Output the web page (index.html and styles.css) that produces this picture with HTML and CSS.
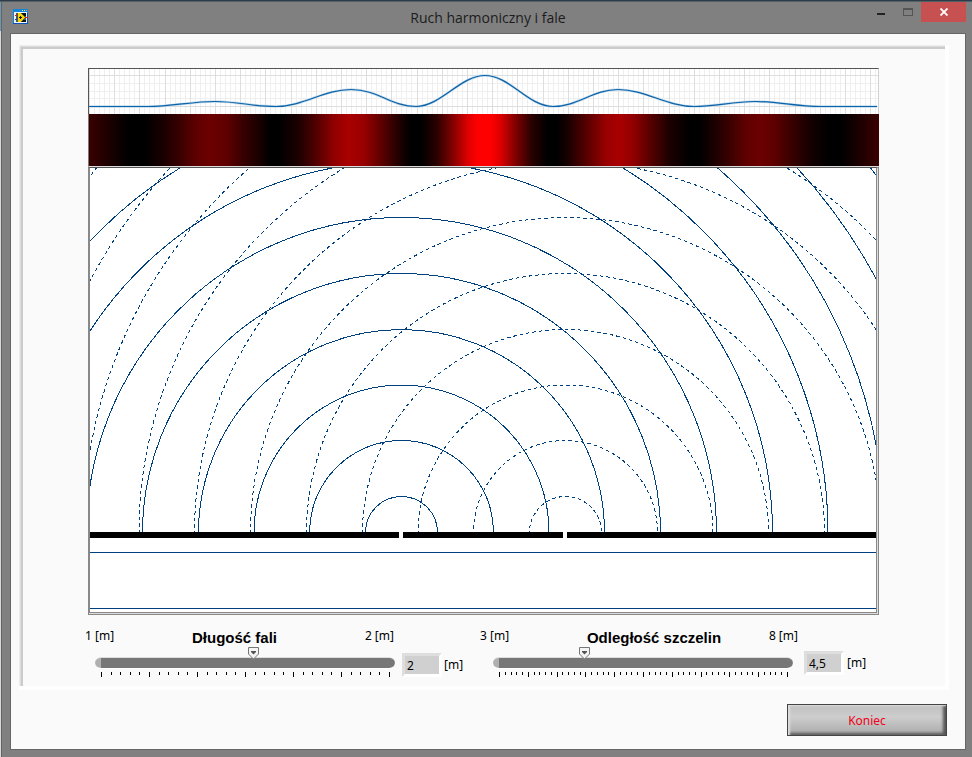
FILE: index.html
```html
<!DOCTYPE html>
<html lang="pl">
<head>
<meta charset="utf-8">
<title>Ruch harmoniczny i fale</title>
<link rel="stylesheet" href="styles.css">
</head>
<body>
<header class="titlebar">
  <svg class="app-icon" viewBox="0 0 15 15" width="15" height="15" shape-rendering="crispEdges" aria-hidden="true">
    <rect width="15" height="15" fill="#0f86dc"/>
    <path d="M0 14H15V4H14V14Z" fill="#0a55bd"/>
    <rect y="14" width="15" height="1" fill="#0a55bd"/>
    <path d="M9 1h1v1H9zM11 1h1v1h-1z" fill="#ffd83c"/>
    <path d="M13 1h1v1h-1z" fill="#ff9a6a"/>
    <rect x="1" y="3" width="13" height="11" fill="#eef4f8"/>
    <path d="M3 4H13V13H3Z" fill="#4a5658"/>
    <path d="M9 4h4v3h-2zM10 11h3v2H9z" fill="#101010"/>
    <path d="M5 4H7L12 8V9L7 13H5Z" fill="#f5d800"/>
    <path d="M7 7h1v3H7zM6 8h3v1H6z" fill="#111"/>
    <path d="M2 6h2v1H2zM12 8h3v1h-3z" fill="#e01b1b"/>
    <path d="M2 10h2v1H2z" fill="#1a2fd0"/>
  </svg>
  <h1 class="title">Ruch harmoniczny i fale</h1>
  <div class="window-buttons">
    <button class="win-btn" type="button" aria-label="Minimalizuj">
      <svg width="10" height="10" viewBox="0 0 10 10" shape-rendering="crispEdges"><path d="M1 6h8v2H1z" fill="#222"/></svg>
    </button>
    <button class="win-btn" type="button" aria-label="Maksymalizuj" disabled>
      <svg width="10" height="8" viewBox="0 0 10 8" shape-rendering="crispEdges"><path d="M0 0H10V8H0ZM1 2V7H9V2Z" fill="#555" fill-rule="evenodd"/></svg>
    </button>
    <button class="win-btn close" type="button" aria-label="Zamknij">
      <svg width="8" height="8" viewBox="0 0 8 8"><path d="M0.5 0.5L7.5 7.5M7.5 0.5L0.5 7.5" stroke="#fff" stroke-width="1.8"/></svg>
    </button>
  </div>
</header>

<main class="client">
  <section class="panel">
    <div class="sim">
      <div class="plot">
        <svg viewBox="0 0 789 45" role="img" aria-label="Natężenie">
          <defs>
            <pattern id="grid" width="126" height="45" patternUnits="userSpaceOnUse">
              <g shape-rendering="crispEdges">
                <path d="M5.5 0v45M10.5 0v45M15.5 0v45M20.5 0v45M30.5 0v45M35.5 0v45M40.5 0v45M45.5 0v45M55.5 0v45M60.5 0v45M65.5 0v45M70.5 0v45M81.5 0v45M86.5 0v45M91.5 0v45M96.5 0v45M106.5 0v45M111.5 0v45M116.5 0v45M121.5 0v45M0 14.5H126M0 22.5H126M0 29.5H126" stroke="#efefef"/>
                <path d="M.5 0v45M25.5 0v45M50.5 0v45M76.5 0v45M101.5 0v45M0 6.5H126M0 37.5H126" stroke="#dedede"/>
              </g>
            </pattern>
            <path id="curve" d="M0 37.5H59C84 37.5 102 32.5 126 32.5C150 32.5 163 37.5 187 37.5C214 37.5 235 20.5 262 20.5C289 20.5 302 37.5 327 37.5C352 37.5 371 6.5 396 6.5C421 6.5 439 37.5 464 37.5C489 37.5 504 20.5 529 20.5C556 20.5 578 37.5 605 37.5C628 37.5 642 32.5 666 32.5C690 32.5 706 37.5 732 37.5H788"/>
          </defs>
          <rect width="789" height="45" fill="url(#grid)"/>
          <use href="#curve" fill="none" stroke="#c4dcec" stroke-width="2.500"/>
          <use href="#curve" fill="none" stroke="#0b62a8" stroke-width="1.200"/>
        </svg>
      </div>
      <div class="fringes"></div>
      <div class="waves">
        <svg viewBox="0 0 786 444" role="img" aria-label="Fale za szczelinami">
          <defs><clipPath id="above"><rect width="786" height="364"/></clipPath></defs>
          <g shape-rendering="crispEdges" fill="none" stroke="#00407f">
            <g clip-path="url(#above)">
              <circle cx="311.500" cy="364.500" r="36"/>
              <circle cx="311.500" cy="364.500" r="92"/>
              <circle cx="311.500" cy="364.500" r="147.500"/>
              <circle cx="311.500" cy="364.500" r="203"/>
              <circle cx="311.500" cy="364.500" r="259"/>
              <circle cx="311.500" cy="364.500" r="315"/>
              <circle cx="311.500" cy="364.500" r="371"/>
              <circle cx="311.500" cy="364.500" r="426.500"/>
              <circle cx="311.500" cy="364.500" r="482.500"/>
              <circle cx="311.500" cy="364.500" r="538"/>
              <circle cx="311.500" cy="364.500" r="594"/>
              <g stroke-dasharray="3.500 3">
                <circle cx="475.500" cy="364.500" r="36"/>
                <circle cx="475.500" cy="364.500" r="92"/>
                <circle cx="475.500" cy="364.500" r="147.500"/>
                <circle cx="475.500" cy="364.500" r="203"/>
                <circle cx="475.500" cy="364.500" r="259"/>
                <circle cx="475.500" cy="364.500" r="315"/>
                <circle cx="475.500" cy="364.500" r="371"/>
                <circle cx="475.500" cy="364.500" r="426.500"/>
                <circle cx="475.500" cy="364.500" r="482.500"/>
                <circle cx="475.500" cy="364.500" r="538"/>
                <circle cx="475.500" cy="364.500" r="594"/>
              </g>
            </g>
            <path d="M0 384.500H786M0 440.500H786"/>
          </g>
          <path d="M0 364H309V370H0ZM313 364H473V370H313ZM477 364H786V370H477Z"/>
        </svg>
      </div>
    </div>

    <div class="controls">
      <div class="control length">
        <div class="scale-head">
          <span>1 [m]</span>
          <label class="name" for="length">Długość fali</label>
          <span>2 [m]</span>
        </div>
        <div class="slider">
          <input class="range" id="length" type="range" min="1" max="2" step="0.01" value="1.53">
          <svg class="ticks" viewBox="0 0 300 5" shape-rendering="crispEdges" aria-hidden="true">
            <defs><pattern id="t1" x="6" width="48" height="5" patternUnits="userSpaceOnUse"><path d="M0 0h1v5H0zM10 0h1v3h-1zM19 0h1v3h-1zM29 0h1v3h-1zM38 0h1v3h-1z"/></pattern></defs>
            <rect x="6" width="289" height="5" fill="url(#t1)"/>
          </svg>
        </div>
        <input class="value" type="text" value="2" aria-label="Długość fali">
        <span class="unit">[m]</span>
      </div>

      <div class="control distance">
        <div class="scale-head">
          <span>3 [m]</span>
          <label class="name" for="distance">Odległość szczelin</label>
          <span>8 [m]</span>
        </div>
        <div class="slider">
          <input class="range" id="distance" type="range" min="3" max="8" step="0.1" value="4.5">
          <svg class="ticks" viewBox="0 0 300 5" shape-rendering="crispEdges" aria-hidden="true">
            <defs><pattern id="t2" x="6" width="144" height="5" patternUnits="userSpaceOnUse"><path d="M0 0h1v5H0zM6 0h1v3h-1zM12 0h1v3h-1zM17 0h1v3h-1zM23 0h1v3h-1zM29 0h1v5h-1zM35 0h1v3h-1zM40 0h1v3h-1zM46 0h1v3h-1zM52 0h1v3h-1zM58 0h1v5h-1zM63 0h1v3h-1zM69 0h1v3h-1zM75 0h1v3h-1zM81 0h1v3h-1zM86 0h1v5h-1zM92 0h1v3h-1zM98 0h1v3h-1zM104 0h1v3h-1zM109 0h1v3h-1zM115 0h1v5h-1zM121 0h1v3h-1zM127 0h1v3h-1zM132 0h1v3h-1zM138 0h1v3h-1z"/></pattern></defs>
            <rect x="6" width="289" height="5" fill="url(#t2)"/>
          </svg>
        </div>
        <input class="value" type="text" value="4,5" aria-label="Odległość szczelin">
        <span class="unit">[m]</span>
      </div>
    </div>
  </section>

  <button class="quit" type="button">Koniec</button>
</main>
</body>
</html>
```
FILE: styles.css
```css
* {
  box-sizing: border-box;
}

body {
  margin: 0;
  min-height: 100vh;
  padding: 0 6px 7px 10px;
  background:
    linear-gradient(#2d3a47, #2d3a47) 0 0 / 100% 1px no-repeat,
    linear-gradient(#555f68, #555f68) 0 1px / 100% 1px no-repeat,
    linear-gradient(#6c98b8, #6c98b8) 0 0 / 1px 31px no-repeat,
    linear-gradient(#d8d8d8, #d8d8d8) 0 0 / 1px 100% no-repeat,
    linear-gradient(#646464, #646464) 1px 0 / 1px 100% no-repeat,
    #808080;
  font-family: "Noto Sans", "Open Sans", sans-serif;
  font-size: 12px;
  line-height: 16px;
  color: #000;
}

.titlebar {
  display: grid;
  grid-template-columns: 1fr auto 1fr;
  height: 33px;
}

.app-icon {
  margin: 9px 0 0 3px;
}

.title {
  margin: 0;
  font-family: "Open Sans", sans-serif;
  font-size: 14px;
  font-weight: 400;
  line-height: 36px;
  color: #1c1c1c;
}

.window-buttons {
  display: flex;
  justify-content: flex-end;
  padding-top: 2px;
}

.win-btn {
  display: flex;
  align-items: center;
  justify-content: center;
  width: 27px;
  height: 20px;
  padding: 0;
  border: 0;
  background: transparent;
}

.win-btn.close {
  width: 45px;
  background: #c75050;
}

.client {
  display: flex;
  flex-direction: column;
  padding: 11px 16px 13px 8px;
  border: 1px solid #666;
  background: #fafafa;
}

.panel {
  padding: 23px 4px 13px;
  box-shadow:
    inset -4px -4px #fff,
    inset 1px 1px #ececec,
    inset 2px 2px #dcdcdc,
    inset 4px 4px #cbcbcb;
}

.sim {
  margin: 0 66px 0 65px;
}

.sim svg {
  display: block;
  width: 100%;
  height: auto;
}

.plot {
  border: 1px solid #555;
  border-right-color: #d0d0d0;
  border-bottom: 0;
  background: #fff;
}

.fringes {
  height: 53px;
  border-left: 1px solid #777;
  border-bottom: 1px solid #ddd;
  background: linear-gradient(to right,
    #3a0000 0%, #1c0000 2.5%, #000 5%, #000 7%, #150000 9%, #380000 11.5%, #5e0000 13.5%,
    #6c0000 15.3%, #5e0000 17.5%, #380000 19.5%, #120000 22%, #000 22.8%, #000 24%,
    #1c0000 26.5%, #580000 29%, #900000 31%, #aa0000 32.8%, #980000 34.8%, #580000 37.2%,
    #1a0000 39.5%, #000 40.7%, #000 42%, #2a0000 44%, #800000 46%, #e00000 48%, #f00 49.2%,
    #f00 50.8%, #e00000 52%, #800000 54%, #2a0000 56%, #000 58%, #000 59.3%, #1a0000 60.7%,
    #580000 63%, #980000 65.4%, #aa0000 67.1%, #900000 69%, #580000 71%, #1c0000 73.5%,
    #000 76%, #000 77.4%, #120000 78.5%, #380000 81%, #5e0000 83%, #6c0000 85%,
    #5e0000 86.7%, #380000 89%, #150000 91.3%, #000 93.5%, #000 95.2%, #1c0000 97.5%, #3a0000 100%);
}

.waves {
  border-style: solid;
  border-width: 1px 3px 3px 2px;
  border-color: #555 #888 #888 #888;
  border-right-style: double;
  border-bottom-style: double;
  background: #ddd;
}

.waves svg {
  background: #fff;
}

.controls {
  display: grid;
  grid-template-columns: 379fr 388fr;
  gap: 16px;
  margin: 13px 77px 0 62px;
}

.control {
  display: grid;
  grid-template-columns: minmax(0, 1fr) 47px 22px;
}

.control.distance {
  grid-template-columns: minmax(0, 1fr) 47px 24px;
}

.scale-head {
  grid-column: 1 / -1;
  display: flex;
  justify-content: space-between;
  height: 19px;
  margin-right: 70px;
}

.name {
  font: bold 15px/20px "Liberation Sans", Arial, sans-serif;
}

.length .name {
  padding-right: 10px;
}

.distance .name {
  padding-left: 30px;
}

.slider {
  margin-left: 10px;
}

.distance .slider {
  margin: 0 4px 0 13px;
}

.range {
  appearance: none;
  display: block;
  width: 100%;
  height: 22px;
  margin: 0;
  padding-top: 10px;
  background: transparent;
}

.range::-webkit-slider-runnable-track {
  height: 12px;
  border-top: 1px solid #ddd;
  border-bottom: 1px solid #fff;
  border-radius: 6px;
  background: linear-gradient(to right, #b0b0b0 6px, #777 6px);
}

.range::-webkit-slider-thumb {
  appearance: none;
  width: 12px;
  height: 13px;
  margin-top: -11px;
  border: 0;
  background: url("data:image/svg+xml,%3Csvg xmlns='http://www.w3.org/2000/svg' width='12' height='13'%3E%3Cpath d='M.5.5H10.500V7L5.500 12L.5 7Z' fill='%23f4f4f4' stroke='%23777'/%3E%3Cpath d='M3 4H8V5L5.500 7.500L3 5Z' fill='%23555'/%3E%3C/svg%3E") no-repeat;
}

.ticks {
  display: block;
  width: 100%;
  margin-top: 3px;
}

.value {
  width: 40px;
  height: 24px;
  margin: 6px 0 0 7px;
  padding: 0 2px;
  border: 3px solid;
  border-color: #dedede #fff #fff #dedede;
  background: #d0d0d0;
  font: inherit;
}

.unit {
  margin: 10px 0 0 2px;
}

.distance .value {
  margin-top: 4px;
}

.distance .unit {
  margin: 8px 0 0 3px;
}

.quit {
  align-self: flex-end;
  width: 160px;
  height: 32px;
  margin: 14px 2px 0 0;
  padding-top: 3px;
  border: 1px solid #444;
  background: linear-gradient(#c0c0c0, #cdcdcd 40%, #aaa);
  box-shadow: inset 2px 1px 2px #ddd, inset -3px -2px 3px #555;
  color: #f00018;
  font: inherit;
}
```
